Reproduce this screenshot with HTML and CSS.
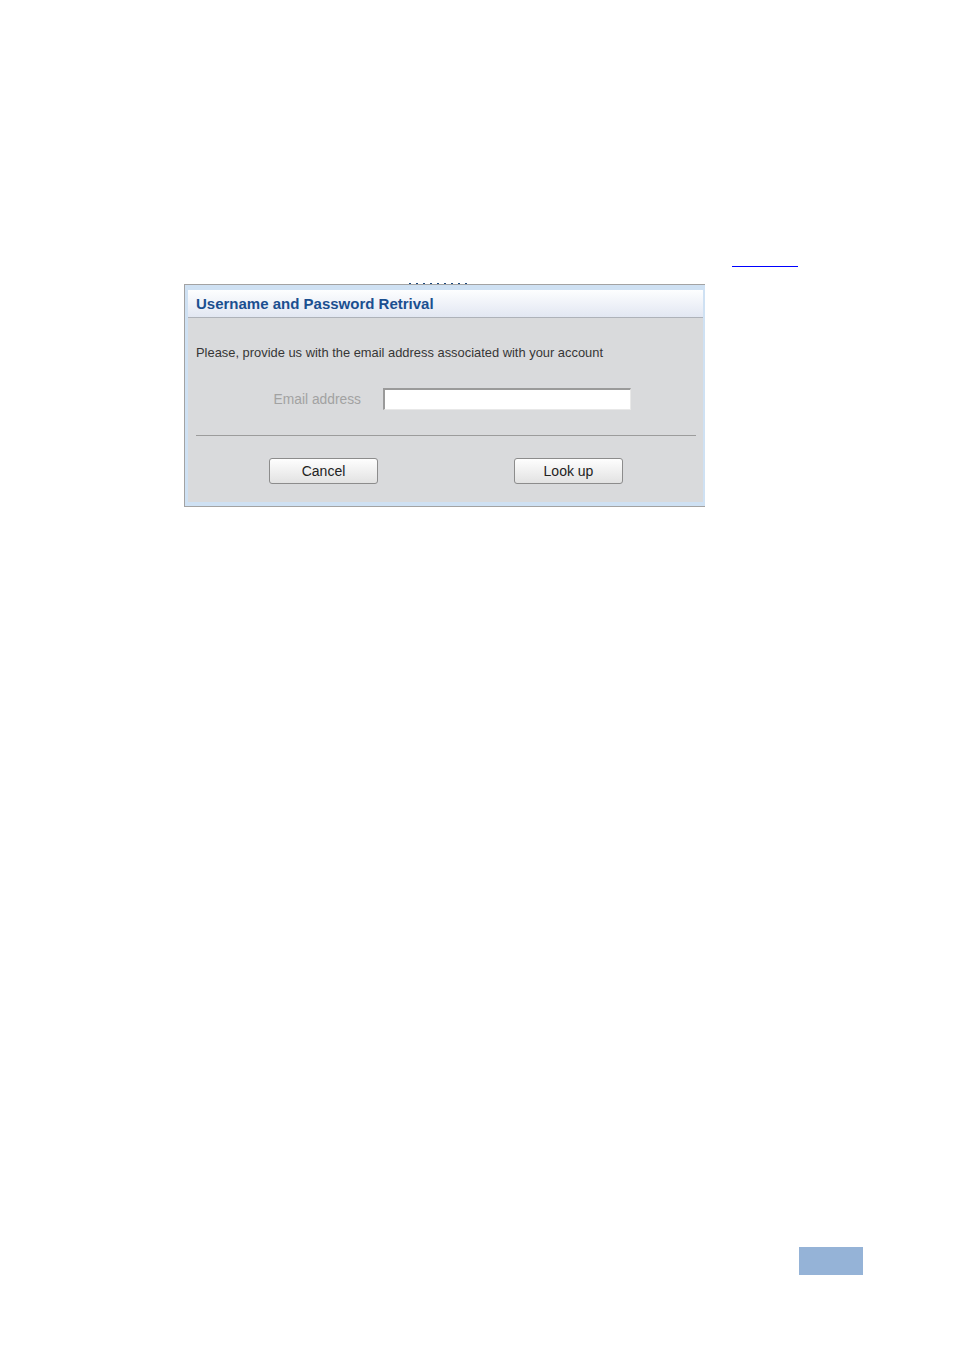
FILE: index.html
```html
<!DOCTYPE html>
<html lang="en">
<head>
<meta charset="utf-8">
<title>Username and Password Retrival</title>
<link rel="stylesheet" href="styles.css">
</head>
<body>
<div class="page">
  <a class="top-link" href="#"></a>
  <div class="dialog">
    <span class="dots"></span>
    <div class="dialog-header">Username and Password Retrival</div>
    <div class="dialog-body">
      <p class="intro">Please, provide us with the email address associated with your account</p>
      <div class="field-row">
        <label class="field-label" for="email">Email address</label>
        <input class="field-input" id="email" type="text">
      </div>
      <hr class="separator">
      <div class="actions">
        <button class="btn" type="button">Cancel</button>
        <button class="btn" type="button">Look up</button>
      </div>
    </div>
  </div>
  <div class="page-tab"></div>
</div>
</body>
</html>
```

FILE: styles.css
```css
html, body {
  margin: 0;
  padding: 0;
  background: #ffffff;
}

.page {
  width: 954px;
  height: 1354px;
  display: flow-root;
  font-family: "Liberation Sans", Arial, sans-serif;
}

.top-link {
  display: block;
  width: 66px;
  height: 1px;
  margin: 266px 0 0 732px;
  background: #0000ff;
}

.dialog {
  position: relative;
  width: 515px;
  margin: 17px 0 0 184px;
  padding: 5px 2px 4px 3px;
  background: #cfe1f3;
  border-top: 1px solid #a3a3a3;
  border-left: 1px solid #a3a3a3;
  border-bottom: 1px solid #a3a3a3;
}

.dots {
  position: absolute;
  top: -2px;
  left: 224px;
  width: 62px;
  height: 1px;
  background: repeating-linear-gradient(90deg, #1c4a80 0 2px, transparent 2px 7px);
}

.dialog-header {
  height: 27px;
  line-height: 27px;
  padding-left: 8px;
  font-size: 15px;
  font-weight: bold;
  color: #1b4f90;
  background: linear-gradient(#fdfeff, #e2e7f2);
  border-bottom: 1px solid #aeb2b9;
}

.dialog-body {
  background: #d9dadc;
  padding: 27px 7px 18px 8px;
}

.intro {
  margin: 0;
  font-size: 12.9px;
  line-height: 15px;
  color: #363636;
}

.field-row {
  display: grid;
  grid-template-columns: 165px 248px;
  column-gap: 22px;
  align-items: center;
  margin-top: 28px;
}

.field-label {
  text-align: right;
  font-size: 13.8px;
  color: #a2a2a2;
}

.field-input {
  box-sizing: border-box;
  width: 248px;
  height: 22px;
  margin: 0;
  padding: 0 4px;
  background: #ffffff;
  border-top: 2px solid #9a9a9a;
  border-left: 2px solid #9a9a9a;
  border-right: 1px solid #e8e8e8;
  border-bottom: 1px solid #e8e8e8;
  outline: none;
}

.separator {
  margin: 25px 0 0 0;
  height: 0;
  border: 0;
  border-top: 1px solid #9c9c9c;
}

.actions {
  display: flex;
  justify-content: space-between;
  padding: 0 73px;
  margin-top: 22px;
}

.btn {
  box-sizing: border-box;
  width: 109px;
  height: 26px;
  margin: 0;
  padding: 0;
  font-family: "Liberation Sans", Arial, sans-serif;
  font-size: 14px;
  color: #222222;
  background: linear-gradient(#fefefe, #e2e2e2);
  border: 1px solid #8c8c8c;
  border-radius: 3px;
}

.page-tab {
  width: 64px;
  height: 28px;
  margin: 740px 0 0 799px;
  background: #95b3d7;
}
```
